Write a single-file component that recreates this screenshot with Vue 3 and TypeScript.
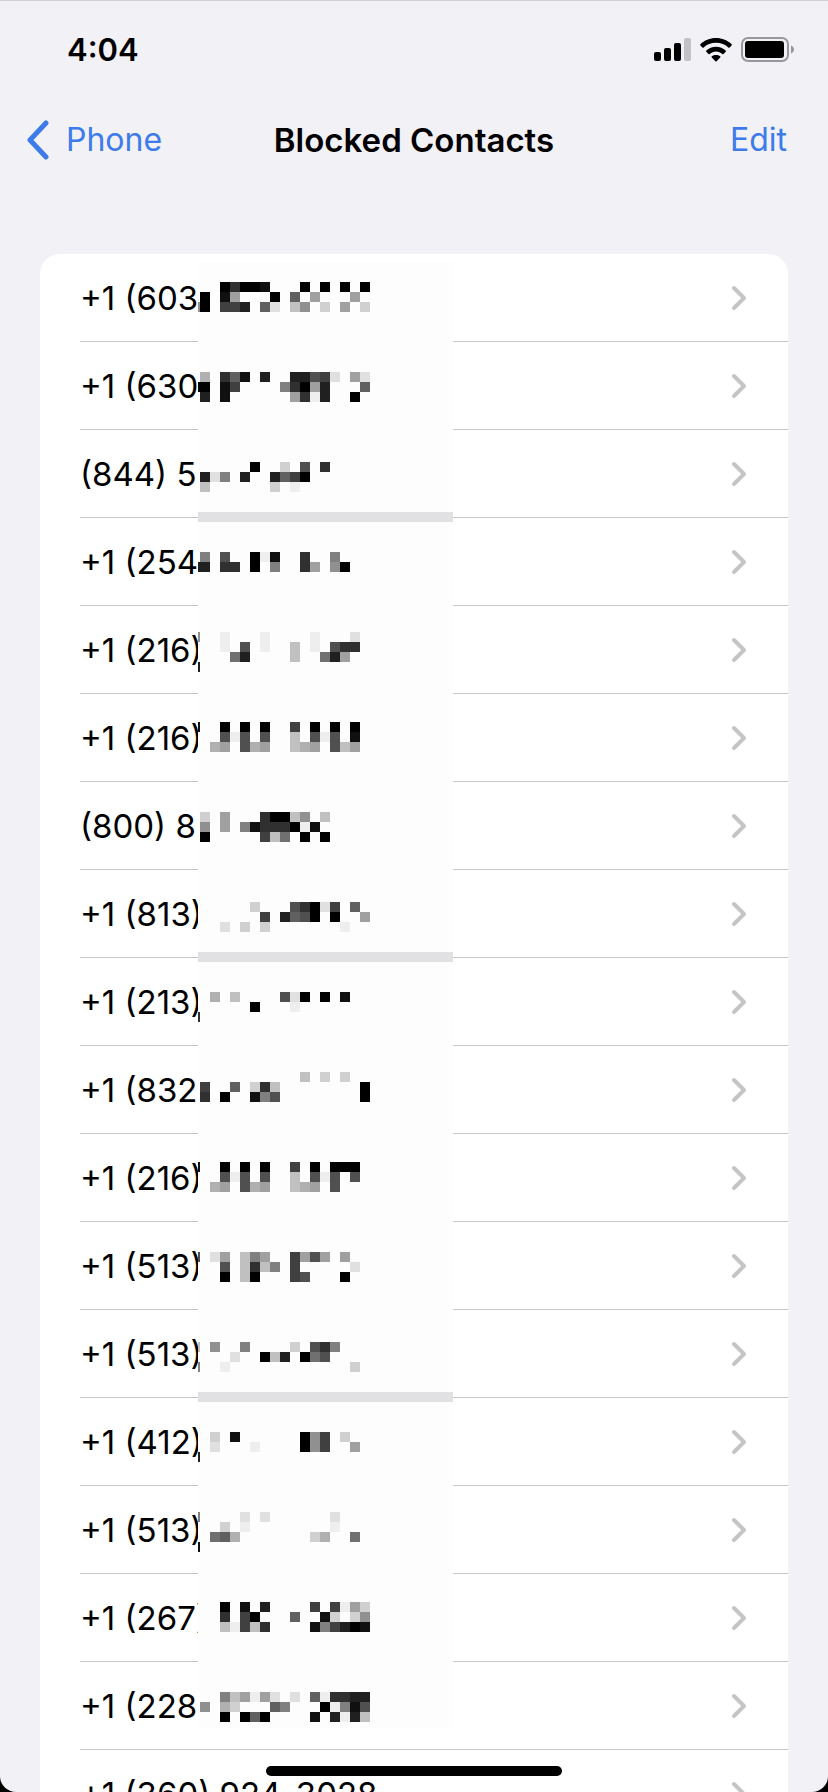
<script setup lang="ts">
interface Contact {
  id: number
  label: string
}

interface Cell {
  x: number
  y: number
  fill: string
}

const labels: string[] = [
  '+1 (603', '+1 (630', '(844) 59', '+1 (254', '+1 (216)', '+1 (216)',
  '(800) 8', '+1 (813)', '+1 (213)', '+1 (832', '+1 (216)', '+1 (513)',
  '+1 (513)', '+1 (412)', '+1 (513)', '+1 (267)', '+1 (228',
  '+1 (360) 924-3028',
]
const contacts: Contact[] = labels.map((label, id) => ({ id, label }))

// Mosaic lines: first tile row, then one string per tile row.
// A hex digit is a grey level, a dot is an empty tile.
const mosaic: [number, string[]][] = [
  [2, ['...03001...0.0.0.0', '.0.1a...0.6.a...a', '90.442.6e.c9.d.a.d']],
  [11, ['.b.361.2..2254e.ae', '00.14....830a2...6', '.2.1......a3f2..0']],
  [20, ['......0..d.5.3', '.2e8.2..2640', '.c......d.f']],
  [29, ['.8.5..0f1..3..8', '22.33.0.8..3a.90']],
  [37, ['9..f...f....f...e', '...f.5.f..c.f.533', '....72....c..72a', '2']],
  [46, ['1..0.0.0..4.0.0.0', '...5f5.5..c.5f5.1', '..ba.5ba..cba.5ca']],
  [55, ['.d.a...300c9.c', '.9.a.813330f1', '.0.....4c7.0.0']],
  [64, ['......d...530e4.6', '.......4.2650.0..a', '...e.d.d.......f']],
  [73, ['..b.c....5e0.0.1', '......0...f', '3']],
  [81, ['...........c.d.d', '.4..6.d3c........0', '.3.0..185........0']],
  [90, ['1..0.0.0..4.0.000', '...5f5.5..c.5f5.5', '..ba.5ba..cba.5']],
  [99, ['5.ea.c8a..4a5a.a', '...5.c3c8.4.....e', '...0.c0...45...0']],
  [108, ['c.9..8....d.538', '....e..0c2.075', '8..f............d']],
  [117, ['..d.1......094.d', '..e...f....094..a', '2']],
  [125, ['8....e.e......e', '...d.f........f', '..76b.......db..7', '1']],
  [134, ['...0.1.2....4.4fad', '...3.40...6..1d.d9', '...cf4c3....184201']],
  [143, ['...8cafae.e.6f3322', '.9.bd...68...0f815', '...0.060....1.2f2c']],
]

const tile = 10
const shade = (level: string): string => {
  const grey = Math.min(parseInt(level, 16) * 16, 238)
  return `rgb(${grey}, ${grey}, ${grey})`
}
const cells: Cell[] = mosaic.flatMap(([start, lines]) =>
  lines.flatMap((line, r) =>
    [...line].flatMap((level, c) =>
      level === '.'
        ? []
        : [{ x: c * tile - 8, y: (start + r) * tile, fill: shade(level) }],
    ),
  ),
)
const bars: number[] = [250, 690, 1130]
</script>

<template>
  <div class="screen">
    <div class="status">
      <span class="time">4:04</span>
      <div class="indicators">
        <svg width="37" height="23" viewBox="0 0 37 23" aria-hidden="true">
          <rect x="0" y="14" width="7" height="9" rx="2" />
          <rect x="10" y="10" width="7" height="13" rx="2" />
          <rect x="20" y="5" width="7" height="18" rx="2" />
          <rect x="30" y="0" width="7" height="23" rx="2" fill="#c2c2c6" />
        </svg>
        <svg width="32" height="24" viewBox="0 0 32 24" aria-hidden="true">
          <path d="M16 0C9.8 0 4.300 2.400 .4 6.200c-.4.400-.4.800 0 1.200l2 2c.4.400.9.400 1.300 0C6.900 6.400 11.200 4.800 16 4.800s9.100 1.600 12.300 4.600c.4.400.9.400 1.300 0l2-2c.4-.4.4-.8 0-1.200C27.700 2.400 22.200 0 16 0Z" />
          <path d="M16 8.800c-3.800 0-7.100 1.400-9.700 3.700-.4.400-.4.900 0 1.300l2.200 2.200c.4.400.8.400 1.200 0 1.700-1.500 3.900-2.400 6.300-2.400s4.600.9 6.300 2.400c.4.400.8.400 1.200 0l2.200-2.200c.4-.4.4-.9 0-1.300-2.600-2.300-5.900-3.700-9.700-3.700Z" />
          <path d="M16 16.900c-1.600 0-3 .5-4.200 1.400-.4.300-.4.800 0 1.200l3.600 3.700c.4.400.8.400 1.200 0l3.600-3.700c.4-.4.4-.9 0-1.200-1.200-.9-2.600-1.400-4.200-1.400Z" />
        </svg>
        <svg width="53" height="25" viewBox="0 0 53 25" aria-hidden="true">
          <rect x="1" y="1" width="46" height="23" rx="6" fill="none" stroke="#98989c" stroke-width="2" />
          <rect x="4" y="4" width="39" height="17" rx="3" />
          <path d="M50 8.500c2 .8 3 2.300 3 4s-1 3.200-3 4Z" fill="#98989c" />
        </svg>
      </div>
    </div>

    <header class="nav">
      <button type="button" class="action back">
        <svg width="24" height="40" viewBox="0 0 24 40" aria-hidden="true">
          <path d="M20 3 4 20l16 17" fill="none" stroke="#3d7bea" stroke-width="5" stroke-linecap="round" stroke-linejoin="round" />
        </svg>
        <span>Phone</span>
      </button>
      <h1>Blocked Contacts</h1>
      <button type="button" class="action edit">Edit</button>
    </header>

    <main class="card">
      <ul>
        <li v-for="contact in contacts" :key="contact.id">
          <button type="button" class="row">
            <span>{{ contact.label }}</span>
            <svg width="16" height="26" viewBox="0 0 16 26" aria-hidden="true">
              <path d="m3 3 10 10L3 23" fill="none" stroke="#c5c5c7" stroke-width="4" stroke-linecap="round" stroke-linejoin="round" />
            </svg>
          </button>
        </li>
      </ul>
      <svg class="mosaic" width="255" height="1466" viewBox="0 0 255 1466" shape-rendering="crispEdges" aria-hidden="true">
        <rect width="255" height="1466" fill="#fdfdfd" />
        <rect v-for="y in bars" :key="y" :y="y" width="255" height="10" fill="#e1e1e3" />
        <rect v-for="(cell, i) in cells" :key="i" :x="cell.x" :y="cell.y" width="10" height="10" :fill="cell.fill" />
      </svg>
    </main>

    <div class="home-bar"></div>
  </div>
</template>

<style>
body {
  background: #000;
}
</style>

<style scoped>
.screen {
  position: relative;
  box-sizing: border-box;
  height: 100vh;
  overflow: hidden;
  border-top: 1px solid #d0d0d4;
  border-radius: 0 0 16px 16px;
  background: #f1f1f6;
  color: #000;
  font-family: Inter, "Liberation Sans", sans-serif;
  font-size: 33px;
  line-height: 40px;
}

.status {
  display: flex;
  align-items: center;
  justify-content: space-between;
  height: 97px;
  padding: 0 34px 0 67px;
}

.time {
  font-size: 31px;
  font-weight: 600;
}

.indicators {
  display: flex;
  align-items: center;
  gap: 9px;
}

.nav {
  display: grid;
  grid-template-columns: 1fr auto 1fr;
  align-items: center;
  height: 84px;
  padding: 0 41px 0 26px;
}

.nav h1 {
  margin: 0;
  padding-left: 15px;
  font-size: 33px;
  font-weight: 600;
}

button {
  margin: 0;
  padding: 0;
  border: 0;
  background: none;
  color: inherit;
  font: inherit;
  cursor: pointer;
}

.action {
  color: #3d7bea;
  font-size: 32px;
}

.back {
  display: flex;
  align-items: center;
  justify-self: start;
  gap: 16px;
}

.edit {
  justify-self: end;
}

.card {
  position: relative;
  margin: 72px 40px 0;
  border-radius: 20px 20px 0 0;
  background: #fff;
}

ul {
  margin: 0;
  padding: 0 0 0 40px;
  list-style: none;
}

li {
  border-bottom: 1px solid #c6c6c8;
}

.row {
  display: flex;
  align-items: center;
  justify-content: space-between;
  width: 100%;
  height: 87px;
  padding-right: 41px;
  text-align: left;
}

.mosaic {
  position: absolute;
  top: 8px;
  left: 158px;
}

.home-bar {
  position: absolute;
  bottom: 16px;
  left: 50%;
  width: 296px;
  height: 10px;
  border-radius: 5px;
  background: #000;
  transform: translateX(-50%);
}
</style>
